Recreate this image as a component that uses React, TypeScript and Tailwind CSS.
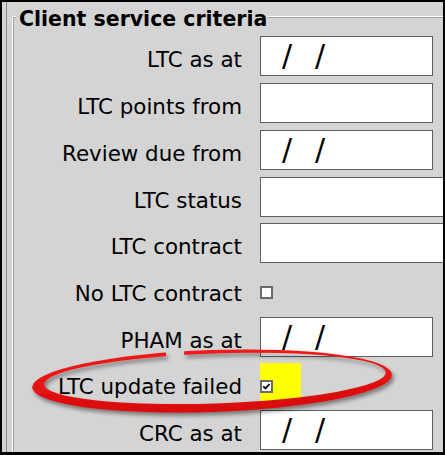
import React from "react";

type Kind = "date" | "text" | "wide" | "check" | "checked";
interface Row {
  label: string;
  kind: Kind;
  mt: string;
}

const rows: Row[] = [
  { label: "LTC as at", kind: "date", mt: "mt-0" },
  { label: "LTC points from", kind: "text", mt: "mt-[7px]" },
  { label: "Review due from", kind: "date", mt: "mt-[7px]" },
  { label: "LTC status", kind: "wide", mt: "mt-[7px]" },
  { label: "LTC contract", kind: "wide", mt: "mt-[6px]" },
  { label: "No LTC contract", kind: "check", mt: "mt-[7px]" },
  { label: "PHAM as at", kind: "date", mt: "mt-[7px]" },
  { label: "LTC update failed", kind: "checked", mt: "mt-[6px]" },
  { label: "CRC as at", kind: "date", mt: "mt-[7px]" },
];

function Checkbox({ checked }: { checked?: boolean }) {
  return (
    <div className="w-[13px] h-[13px] border-2 border-[#6a6a6a] bg-white flex items-center justify-center">
      {checked && (
        <svg width="9" height="9" viewBox="0 0 9 9">
          <polyline points="1.3,4.3 3.4,6.4 7.6,2" fill="none" stroke="#000" strokeWidth="1.8" />
        </svg>
      )}
    </div>
  );
}

function Control({ kind }: { kind: Kind }) {
  if (kind === "date") {
    return (
      <div className="w-[173px] h-10 shrink-0 border border-[#5e5e5e] bg-white flex items-start pt-[4px] pl-[21px] text-[30px] leading-[30px] text-black">
        <span>/</span>
        <span className="ml-[23px]">/</span>
      </div>
    );
  }
  if (kind === "text") {
    return <div className="w-[173px] h-10 shrink-0 border border-[#5e5e5e] bg-white" />;
  }
  if (kind === "wide") {
    return <div className="w-[220px] h-10 shrink-0 border border-[#5e5e5e] bg-white" />;
  }
  if (kind === "check") {
    return (
      <div className="h-10 pt-[16px]">
        <Checkbox />
      </div>
    );
  }
  return (
    <div className="w-[41px] h-[42px] shrink-0 bg-[#ffff00] pt-[17px]">
      <Checkbox checked />
    </div>
  );
}

export default function App() {
  return (
    <div className="relative w-[445px] h-[455px] font-['DejaVu_Sans',_Verdana,_sans-serif]">
      <div className="w-[445px] h-[455px] bg-[#d4d4d4] border-t-2 border-l-2 border-r-2 border-b-[3px] border-black overflow-hidden">
        <div className="h-full ml-[4px] border-l border-[#8a8a8a] pl-[5px] pt-[14px]">
          <div className="h-full w-[460px] border-l border-t border-white">
            <div className="h-full border-l border-t border-[#a0a0a0]">
              <div className="flex">
                <div className="-mt-[11px] ml-[2px] pl-[3px] pr-[1px] bg-[#d4d4d4] text-[20.5px] leading-[24px] font-bold text-black">
                  Client service criteria
                </div>
              </div>
              <div className="mt-[5px] flex flex-col">
                {rows.map((r) => (
                  <div key={r.label} className={`flex items-start h-10 ${r.mt}`}>
                    <div className="w-[228px] h-10 shrink-0 text-right text-[21.4px] leading-[48px] text-black whitespace-nowrap">
                      {r.label}
                    </div>
                    <div className="ml-[18px]">
                      <Control kind={r.kind} />
                    </div>
                  </div>
                ))}
              </div>
            </div>
          </div>
        </div>
      </div>
      <svg
        className="absolute left-0 top-0 pointer-events-none"
        width="445"
        height="455"
        viewBox="0 0 445 455"
      >
        <defs>
          <filter id="sh" x="-10%" y="-50%" width="120%" height="200%">
            <feDropShadow dx="2" dy="3" stdDeviation="2.2" floodColor="#000" floodOpacity="0.45" />
          </filter>
          <mask id="gap">
            <rect x="0" y="0" width="445" height="455" fill="#fff" />
            <rect x="167" y="340" width="18" height="18" fill="#000" />
          </mask>
          <linearGradient id="rg" x1="0" y1="0" x2="0" y2="1">
            <stop offset="0" stopColor="#f21a1a" />
            <stop offset="1" stopColor="#d60c0c" />
          </linearGradient>
        </defs>
        <g filter="url(#sh)">
          <path
            mask="url(#gap)"
            fillRule="evenodd"
            fill="url(#rg)"
            transform="rotate(-2 213 380)"
            d="M32 381 a180 31 0 1 0 360 0 a180 31 0 1 0 -360 0 Z M44 378.5 a171 25 0 1 0 342 0 a171 25 0 1 0 -342 0 Z"
          />
        </g>
      </svg>
    </div>
  );
}
